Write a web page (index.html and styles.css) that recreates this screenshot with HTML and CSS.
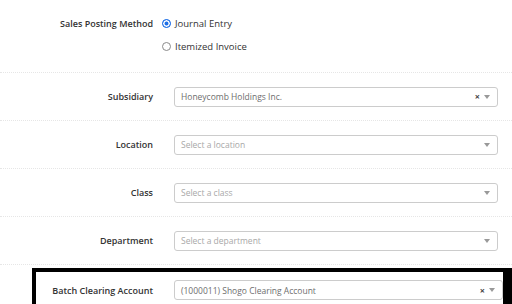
FILE: index.html
```html
<!DOCTYPE html>
<html lang="en">
<head>
    <meta charset="UTF-8">
    <meta name="viewport" content="width=device-width, initial-scale=1.0">
    <title>Sales Settings</title>
    <link rel="stylesheet" href="styles.css">
</head>
<body>
    <div class="form">
        <div class="row row-radio">
            <div class="label">Sales Posting Method</div>
            <div class="radio-list">
                <div class="radio-option">
                    <span class="radio checked"></span>
                    <span>Journal Entry</span>
                </div>
                <div class="radio-option">
                    <span class="radio"></span>
                    <span>Itemized Invoice</span>
                </div>
            </div>
        </div>

        <div class="row">
            <div class="label">Subsidiary</div>
            <div class="select">
                <span class="select-value">Honeycomb Holdings Inc.</span>
                <span class="select-clear">&times;</span>
                <span class="select-arrow"></span>
            </div>
        </div>

        <div class="row">
            <div class="label">Location</div>
            <div class="select">
                <span class="select-placeholder">Select a location</span>
                <span class="select-arrow"></span>
            </div>
        </div>

        <div class="row">
            <div class="label">Class</div>
            <div class="select">
                <span class="select-placeholder">Select a class</span>
                <span class="select-arrow"></span>
            </div>
        </div>

        <div class="row">
            <div class="label">Department</div>
            <div class="select">
                <span class="select-placeholder">Select a department</span>
                <span class="select-arrow"></span>
            </div>
        </div>

        <div class="highlight">
            <div class="row row-plain">
                <div class="label">Batch Clearing Account</div>
                <div class="select">
                    <span class="select-value">(1000011) Shogo Clearing Account</span>
                    <span class="select-clear">&times;</span>
                    <span class="select-arrow"></span>
                </div>
            </div>
        </div>
    </div>
</body>
</html>
```

FILE: styles.css
```css
:root {
    --text: #333333;
    --value: #6e6e6e;
    --placeholder: #a8a8a8;
    --border: #cccccc;
    --divider: #e6e6e6;
    --blue: #1e6fe6;
}

* {
    box-sizing: border-box;
    margin: 0;
    padding: 0;
}

body {
    font-family: 'Open Sans', sans-serif;
    color: var(--text);
    background-color: #ffffff;
    width: 512px;
    height: 304px;
    overflow: hidden;
}

.row {
    display: grid;
    grid-template-columns: 153px 1fr;
    column-gap: 9px;
    align-items: center;
    height: 48px;
    padding-right: 14px;
    border-bottom: 1px dotted var(--divider);
}

.row-radio {
    height: 73px;
    align-items: start;
    padding-top: 12px;
}

.label {
    text-align: right;
    font-size: 9px;
    font-weight: 600;
    line-height: 23px;
    white-space: nowrap;
}

.radio-list {
    display: flex;
    flex-direction: column;
}

.radio-option {
    display: flex;
    align-items: center;
    gap: 4px;
    height: 23px;
    font-size: 9.5px;
}

.radio {
    width: 9px;
    height: 9px;
    border: 1px solid #8a8a8a;
    border-radius: 50%;
    background-color: #ffffff;
}

.radio.checked {
    border-color: var(--blue);
    background-color: var(--blue);
    box-shadow: inset 0 0 0 1.5px #ffffff;
}

.select {
    display: flex;
    align-items: center;
    height: 20px;
    margin-left: 12px;
    padding: 0 6px;
    border: 1px solid var(--border);
    border-radius: 3px;
    background-color: #ffffff;
    font-size: 8.5px;
}

.select-value {
    flex: 1;
    color: var(--value);
}

.select-placeholder {
    flex: 1;
    color: var(--placeholder);
}

.select-clear {
    color: #444444;
    font-size: 9px;
    font-weight: 700;
    margin-right: 4px;
}

.select-arrow {
    width: 0;
    height: 0;
    border-left: 3px solid transparent;
    border-right: 3px solid transparent;
    border-top: 4px solid #999999;
    margin-right: 1px;
}

.highlight {
    margin-top: 3px;
    margin-left: 32px;
    width: 480px;
    height: 44px;
    border: 4px solid #000000;
    border-right-width: 9px;
    padding-top: 4px;
}

.row-plain {
    grid-template-columns: 117px 1fr;
    height: 28px;
    padding-right: 0;
    border-bottom: none;
}
```
